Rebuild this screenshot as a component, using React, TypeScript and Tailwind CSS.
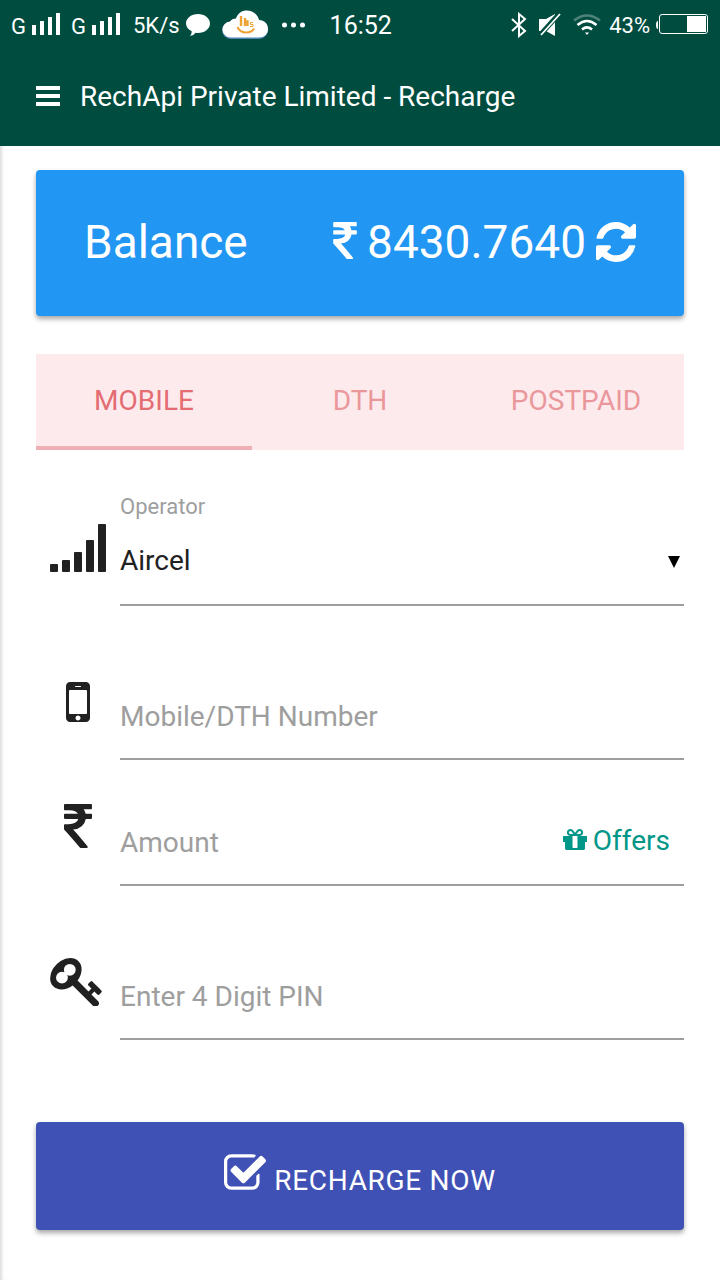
import { useState } from "react";
import type { ReactNode } from "react";

interface GlyphProps {
  viewBox: string;
  path: string;
  className: string;
}

const glyphs = {
  rupee: {
    viewBox: "0 128 898 1408",
    path: "M898 470v102q0 14-9 23t-23 9h-168q-23 144-129 234t-276 110q167 178 459 536 14 16 4 34-8 18-29 18h-195q-16 0-25-12-306-367-498-571-9-9-9-22v-127q0-13 9.5-22.5t22.5-9.5h112q132 0 212.5-43t102.5-125h-427q-14 0-23-9t-9-23v-102q0-14 9-23t23-9h413q-57-113-268-113h-145q-13 0-22.5-9.5t-9.5-22.5v-133q0-14 9-23t23-9h832q14 0 23 9t9 23v102q0 14-9 23t-23 9h-233q47 61 64 144h171q14 0 23 9t9 23z",
  },
  refresh: {
    viewBox: "0 128 1536 1536",
    path: "M1511 1056q0 5-1 7-64 268-268 434.5t-478 166.5q-146 0-282.5-55t-243.5-157l-129 129q-19 19-45 19t-45-19-19-45v-448q0-26 19-45t45-19h448q26 0 45 19t19 45-19 45l-137 137q71 66 161 102t187 36q134 0 250-65t186-179q11-17 53-117 8-23 30-23h192q13 0 22.5 9.5t9.5 22.5zm25-800v448q0 26-19 45t-45 19h-448q-26 0-45-19t-19-45 19-45l138-138q-148-137-349-137-134 0-250 65t-186 179q-11 17-53 117-8 23-30 23h-199q-13 0-22.5-9.5t-9.5-22.5v-7q65-268 270-434.5t480-166.5q146 0 284 55.5t245 156.5l130-129q19-19 45-19t45 19 19 45z",
  },
  phone: {
    viewBox: "512 256 768 1280",
    path: "M976 1408q0-33-23.5-56.5t-56.5-23.5-56.5 23.5-23.5 56.5 23.5 56.5 56.5 23.5 56.5-23.5 23.5-56.5zm208-160v-704q0-13-9.5-22.5t-22.5-9.5h-512q-13 0-22.5 9.5t-9.5 22.5v704q0 13 9.5 22.5t22.5 9.5h512q13 0 22.5-9.5t9.5-22.5zm-192-848q0-16-16-16h-160q-16 0-16 16t16 16h160q16 0 16-16zm288-16v1024q0 52-38 90t-90 38h-512q-52 0-90-38t-38-90v-1024q0-52 38-90t90-38h512q52 0 90 38t38 90z",
  },
  gift: {
    viewBox: "128 192 1536 1344",
    path: "M1056 1356v-716h-320v716q0 25 18 38.5t46 13.5h192q28 0 46-13.5t18-38.5zm-456-844h195l-126-161q-26-31-69-31-40 0-68 28t-28 68 28 68 68 28zm688-96q0-40-28-68t-68-28q-43 0-69 31l-125 161h194q40 0 68-28t28-68zm376 256v320q0 14-9 23t-23 9h-96v416q0 40-28 68t-68 28h-1088q-40 0-68-28t-28-68v-416h-96q-14 0-23-9t-9-23v-320q0-14 9-23t23-9h440q-93 0-158.5-65.5t-65.5-158.5 65.5-158.5 158.5-65.5q107 0 168 77l128 165 128-165q61-77 168-77 93 0 158.5 65.5t65.5 158.5-65.5 158.5-158.5 65.5h440q14 0 23 9t9 23z",
  },
  key: {
    viewBox: "0 128 1683 1562",
    path: "M832 512q0-80-56-136t-136-56-136 56-56 136q0 42 19 83-41-19-83-19-80 0-136 56t-56 136 56 136 136 56 136-56 56-136q0-42-19-83 41 19 83 19 80 0 136-56t56-136zm851 704q0 17-49 66t-66 49q-9 0-28.5-16t-36.5-33-38.5-40-24.5-26l-96 96 220 220q28 28 28 68 0 42-39 81t-81 39q-40 0-68-28l-671-671q-176 131-365 131-163 0-265.5-102.5t-102.5-265.5q0-160 95-313t248-248 313-95q163 0 265.5 102.5t102.5 265.5q0 189-131 365l355 355 96-96q-3-3-26-24.5t-40-38.5-33-36.5-16-28.5q0-17 49-66t66-49q13 0 23 10 6 6 46 44.5t82 79.5 86.5 86 73 78 28.5 41z",
  },
  check: {
    viewBox: "64 128 1664 1408",
    path: "M1472 930v318q0 119-84.5 203.5t-203.5 84.5h-832q-119 0-203.5-84.5t-84.5-203.5v-832q0-119 84.5-203.5t203.5-84.5h832q63 0 117 25 15 7 18 23 3 17-9 29l-49 49q-10 10-23 10-3 0-9-2-23-6-45-6h-832q-66 0-113 47t-47 113v832q0 66 47 113t113 47h832q66 0 113-47t47-113v-254q0-13 9-22l64-64q10-10 23-10 6 0 12 3 20 8 20 29zm231-489l-814 814q-24 24-57 24t-57-24l-430-430q-24-24-24-57t24-57l110-110q24-24 57-24t57 24l263 263 647-647q24-24 57-24t57 24l110 110q24 24 24 57t-24 57z",
  },
};

const tabs = ["MOBILE", "DTH", "POSTPAID"];

const inputClass =
  "h-[82px] w-full min-w-0 flex-1 bg-transparent pb-0.5 text-[28px] text-[#212121] outline-none placeholder:text-[#9e9e9e] placeholder:opacity-100";

function Glyph({ viewBox, path, className }: GlyphProps) {
  return (
    <svg viewBox={viewBox} fill="currentColor" className={className} aria-hidden="true">
      <path d={path} />
    </svg>
  );
}

function SimSignal() {
  return (
    <div className="flex items-end gap-1.5">
      <span className="text-[22px] leading-5">G</span>
      <svg viewBox="0 0 29 22" className="mb-0.5 h-[22px] w-[29px]" fill="currentColor" aria-hidden="true">
        <path d="M0 12h4v10H0zM8 8h4v14H8zM16 4h4v18h-4zM24 0h4v22h-4z" />
      </svg>
    </div>
  );
}

function StatusBar() {
  return (
    <div className="flex h-[50px] items-center pr-3 pl-[11px] text-[22px]">
      <div className="flex gap-2.5">
        <SimSignal />
        <SimSignal />
      </div>
      <span className="ml-3">5K/s</span>
      <svg viewBox="0 0 24 22" className="ml-1.5 h-[22px] w-6" fill="currentColor" aria-hidden="true">
        <path d="M12 0c6.600 0 12 4.200 12 9.500S18.600 19 12 19q-1.200 0-2.400-.2Q8 21.500 4 22q1.800-1.800 1.700-4.700C2.200 15.600 0 12.800 0 9.500 0 4.200 5.400 0 12 0z" />
      </svg>
      <svg viewBox="0 0 48 30" className="ml-3 h-[30px] w-12" aria-hidden="true">
        <path
          d="M9 29a8.500 8.500 0 0 1-1-17q2-3 6-3C16 3 20 1 24.500 1 31 1 36 5 37 10c5 0 9 4 9 9.500S42 29 37 29z"
          fill="#4f83b5"
        />
        <path
          d="M9 27.500a8 8 0 0 1-1-16q2-3 6-3C16 3 20 .5 24.500.5 31 .5 36 5 37 10c5 0 9 3.500 9 9s-4 8.500-9 8.500z"
          fill="#fff"
        />
        <g fill="none" stroke="#eea236">
          <path d="M19 6v10M23 8v8M22 11.500h3.500V16" strokeWidth="2.400" />
          <path d="M31 12.500h-2.500v2H31v2h-3" strokeWidth="1" />
          <path d="M15.500 17q2.500 5.500 8.500 5.500t8-4" strokeWidth="2" />
        </g>
      </svg>
      <svg viewBox="0 0 24 6" className="ml-3 h-1.5 w-6" fill="currentColor" aria-hidden="true">
        <circle cx="2.500" cy="3" r="2.500" />
        <circle cx="11.500" cy="3" r="2.500" />
        <circle cx="20.500" cy="3" r="2.500" />
      </svg>
      <time className="ml-6 pt-0.5 text-[25px]">16:52</time>

      <div className="ml-auto flex items-center">
        <svg viewBox="0 0 16 26" className="h-[26px] w-4" fill="none" stroke="currentColor" strokeWidth="2" aria-hidden="true">
          <path d="M1 7l13 12-6 5V2l6 5L1 19" />
        </svg>
        <svg viewBox="0 0 22 24" className="ml-3 h-6 w-[22px]" aria-hidden="true">
          <path d="M0 6h7l9-5v22l-9-5H0z" fill="currentColor" />
          <path d="M1 22L20 1" stroke="#004d40" strokeWidth="5" />
          <path d="M2 22L21 1" stroke="currentColor" strokeWidth="1.800" />
        </svg>
        <svg viewBox="0 0 28 22" className="ml-3 h-[22px] w-7" fill="none" stroke="currentColor" strokeWidth="2.600" aria-hidden="true">
          <path d="M1 6.500q13-10 26 0" opacity="0.300" />
          <path d="M4.500 11q9.500-8 19 0M9 15.500q5-4.200 10 0" />
          <path d="M12 18.500h4l-2 2.500z" fill="currentColor" stroke="none" />
        </svg>
        <span className="ml-2">43%</span>
        <svg viewBox="0 0 52 22" className="ml-1.5 h-[22px] w-[52px]" aria-hidden="true">
          <path d="M2 7q-2 0-2 4t2 4z" fill="currentColor" />
          <rect x="3.500" y="0.500" width="48" height="19" rx="2.500" fill="none" stroke="currentColor" />
          <path d="M31 2h19v16H31z" fill="currentColor" />
        </svg>
      </div>
    </div>
  );
}

function FieldRow({ icon, children }: { icon: ReactNode; children: ReactNode }) {
  return (
    <div className="flex items-start">
      <div className="flex h-[52px] w-21 shrink-0 items-center justify-center">{icon}</div>
      <div className="flex min-w-0 flex-1 items-center border-b-2 border-[#9e9e9e]">{children}</div>
    </div>
  );
}

export default function App() {
  const [activeTab, setActiveTab] = useState("MOBILE");
  const [operator, setOperator] = useState("Aircel");

  return (
    <div className="min-h-screen bg-white font-['Roboto',sans-serif] text-[#212121]">
      <header className="bg-[#004d40] text-white">
        <StatusBar />
        <div className="flex h-24 items-center gap-5 px-9">
          <button type="button" aria-label="Menu">
            <svg viewBox="0 0 24 20" className="mb-1 h-5 w-6" fill="currentColor" aria-hidden="true">
              <path d="M0 0h24v4H0zM0 8h24v4H0zM0 16h24v4H0z" />
            </svg>
          </button>
          <h1 className="pb-0.5 text-[28px]">RechApi Private Limited - Recharge</h1>
        </div>
      </header>

      <main className="px-9 pt-6 pb-[50px] shadow-[inset_4px_0_4px_-3px_rgba(0,0,0,0.2)]">
        {/* Balance */}
        <section className="flex h-[146px] items-center justify-between rounded-sm bg-[#2196f3] px-12 pb-0.5 text-[46px] text-white shadow-[0_3px_5px_rgba(0,0,0,0.35)]">
          <span>Balance</span>
          <div className="flex items-center gap-2.5">
            <Glyph {...glyphs.rupee} className="mb-1 h-[37px] w-6" />
            <span>8430.7640</span>
            <button type="button" aria-label="Refresh balance">
              <Glyph {...glyphs.refresh} className="size-10" />
            </button>
          </div>
        </section>

        {/* Tabs */}
        <div role="tablist" className="mt-[38px] grid h-24 grid-cols-3 bg-[#fdeaed] text-[28px]">
          {tabs.map((tab) => (
            <button
              key={tab}
              type="button"
              role="tab"
              aria-selected={activeTab === tab}
              onClick={() => setActiveTab(tab)}
              className={`border-b-4 pt-0.5 ${
                activeTab === tab
                  ? "border-[#efb0b5] text-[#e36d73]"
                  : "border-transparent text-[#ea979c]"
              }`}
            >
              {tab}
            </button>
          ))}
        </div>

        <form onSubmit={(e) => e.preventDefault()}>
          <label htmlFor="operator" className="mt-11 ml-21 block text-[22px] leading-[26px] text-[#9e9e9e]">
            Operator
          </label>
          <FieldRow
            icon={
              <svg viewBox="0 0 56 48" className="mt-1 h-12 w-14" fill="currentColor" aria-hidden="true">
                <rect x="0" y="40" width="8" height="8" rx="1" />
                <rect x="12" y="36" width="8" height="12" rx="1" />
                <rect x="24" y="28" width="8" height="20" rx="1" />
                <rect x="36" y="16" width="8" height="32" rx="1" />
                <rect x="48" y="0" width="8" height="48" rx="1" />
              </svg>
            }
          >
            <select
              id="operator"
              value={operator}
              onChange={(e) => setOperator(e.target.value)}
              className="h-[84px] min-w-0 flex-1 appearance-none bg-transparent pb-0.5 text-[28px] outline-none"
            >
              <option>Aircel</option>
              <option>Airtel</option>
              <option>BSNL</option>
              <option>Idea</option>
              <option>Vodafone</option>
            </select>
            <svg viewBox="0 0 12 12" className="mr-1 size-3 text-black" fill="currentColor" aria-hidden="true">
              <path d="M0 0h12L6 12z" />
            </svg>
          </FieldRow>

          <div className="mt-[70px]">
            <FieldRow icon={<Glyph {...glyphs.phone} className="h-10 w-6" />}>
              <input type="tel" aria-label="Mobile/DTH Number" placeholder="Mobile/DTH Number" className={inputClass} />
            </FieldRow>
          </div>

          <div className="mt-[42px]">
            <FieldRow icon={<Glyph {...glyphs.rupee} className="mb-1 h-11 w-7" />}>
              <input type="text" aria-label="Amount" placeholder="Amount" className={inputClass} />
              <a href="#offers" className="mr-3.5 flex items-center gap-1.5 pb-1 text-[28px] text-[#009688]">
                <Glyph {...glyphs.gift} className="mb-1 h-[21px] w-6" />
                Offers
              </a>
            </FieldRow>
          </div>

          <div className="mt-[70px]">
            <FieldRow icon={<Glyph {...glyphs.key} className="mr-1 h-12 w-[52px]" />}>
              <input type="password" aria-label="Enter 4 Digit PIN" placeholder="Enter 4 Digit PIN" className={inputClass} />
            </FieldRow>
          </div>

          <button
            type="submit"
            className="mt-[82px] flex h-27 w-full items-center justify-center gap-2 rounded-sm bg-[#3f51b5] text-[28px] text-white shadow-[0_3px_5px_rgba(0,0,0,0.35)]"
          >
            <Glyph {...glyphs.check} className="mb-2 h-9 w-[42px]" />
            <span className="pt-2.5 tracking-wide">RECHARGE NOW</span>
          </button>
        </form>
      </main>
    </div>
  );
}
